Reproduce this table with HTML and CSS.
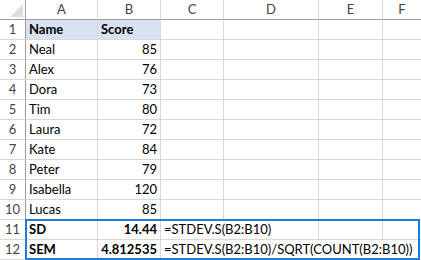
FILE: index.html
```html
<!DOCTYPE html>
<html lang="en">
<head>
    <meta charset="UTF-8">
    <title>Standard error of mean</title>
    <link rel="stylesheet" href="styles.css">
</head>
<body>
    <div class="sheet">
        <div class="corner"></div>
        <div class="col-head">A</div>
        <div class="col-head">B</div>
        <div class="col-head">C</div>
        <div class="col-head">D</div>
        <div class="col-head">E</div>
        <div class="col-head last">F</div>

        <div class="row-head">1</div>
        <div class="cell title">Name</div>
        <div class="cell title">Score</div>
        <div class="cell"></div><div class="cell"></div><div class="cell"></div><div class="cell last"></div>

        <div class="row-head">2</div>
        <div class="cell">Neal</div><div class="cell num">85</div>
        <div class="cell"></div><div class="cell"></div><div class="cell"></div><div class="cell last"></div>

        <div class="row-head">3</div>
        <div class="cell">Alex</div><div class="cell num">76</div>
        <div class="cell"></div><div class="cell"></div><div class="cell"></div><div class="cell last"></div>

        <div class="row-head">4</div>
        <div class="cell">Dora</div><div class="cell num">73</div>
        <div class="cell"></div><div class="cell"></div><div class="cell"></div><div class="cell last"></div>

        <div class="row-head">5</div>
        <div class="cell">Tim</div><div class="cell num">80</div>
        <div class="cell"></div><div class="cell"></div><div class="cell"></div><div class="cell last"></div>

        <div class="row-head">6</div>
        <div class="cell">Laura</div><div class="cell num">72</div>
        <div class="cell"></div><div class="cell"></div><div class="cell"></div><div class="cell last"></div>

        <div class="row-head">7</div>
        <div class="cell">Kate</div><div class="cell num">84</div>
        <div class="cell"></div><div class="cell"></div><div class="cell"></div><div class="cell last"></div>

        <div class="row-head">8</div>
        <div class="cell">Peter</div><div class="cell num">79</div>
        <div class="cell"></div><div class="cell"></div><div class="cell"></div><div class="cell last"></div>

        <div class="row-head">9</div>
        <div class="cell">Isabella</div><div class="cell num">120</div>
        <div class="cell"></div><div class="cell"></div><div class="cell"></div><div class="cell last"></div>

        <div class="row-head">10</div>
        <div class="cell">Lucas</div><div class="cell num">85</div>
        <div class="cell"></div><div class="cell"></div><div class="cell"></div><div class="cell last"></div>

        <div class="row-head">11</div>
        <div class="cell bold">SD</div><div class="cell num bold">14.44</div>
        <div class="cell span2">=STDEV.S(B2:B10)</div><div class="cell"></div><div class="cell last"></div>

        <div class="row-head">12</div>
        <div class="cell bold">SEM</div><div class="cell num bold">4.812535</div>
        <div class="cell span4 last">=STDEV.S(B2:B10)/SQRT(COUNT(B2:B10))</div>

        <!-- highlight around the result rows -->
        <div class="result-box"></div>
    </div>
</body>
</html>
```

FILE: styles.css
```css
body {
    margin: 0;
    background: #ffffff;
    font-family: Lato, "Liberation Sans", sans-serif;
    font-size: 13px;
    color: #000000;
}
.sheet {
    position: relative;
    display: grid;
    grid-template-columns: 26px 72px 63px 63px 95px 64px 1fr;
    grid-auto-rows: 20px;
    width: 421px;
}
.sheet > div {
    box-sizing: border-box;
}
.corner {
    position: relative;
    border-right: 1px solid #9e9e9e;
    border-bottom: 1px solid #9e9e9e;
}
.corner::after {
    content: "";
    position: absolute;
    right: 2px;
    bottom: 2px;
    border-style: solid;
    border-width: 0 0 13px 13px;
    border-color: transparent transparent #dedede transparent;
}
.col-head {
    text-align: center;
    line-height: 19px;
    color: #444444;
    border-right: 1px solid #d8d8d8;
    border-bottom: 1px solid #9e9e9e;
}
.row-head {
    text-align: center;
    line-height: 19px;
    color: #444444;
    border-right: 1px solid #9e9e9e;
    border-bottom: 1px solid #d8d8d8;
}
.cell {
    padding: 0 3px;
    line-height: 19px;
    white-space: nowrap;
    border-right: 1px solid #d8d8d8;
    border-bottom: 1px solid #d8d8d8;
}
.last {
    border-right: none;
}
.num {
    text-align: right;
}
.bold,
.title {
    font-weight: bold;
}
.title {
    background: #d9e1f2;
}
.span2 {
    grid-column: span 2;
}
.span4 {
    grid-column: span 4;
}
.result-box {
    position: absolute;
    left: 25px;
    top: 219px;
    width: 395px;
    height: 41px;
    box-sizing: border-box;
    border: 2px solid #1f7be0;
    pointer-events: none;
}
```
